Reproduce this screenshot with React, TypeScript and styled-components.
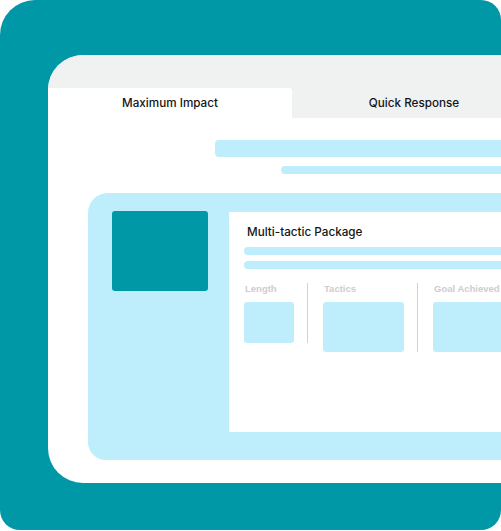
import styled, {createGlobalStyle} from "styled-components";

const GlobalStyle = createGlobalStyle`
    html, body {
        margin: 0;
        padding: 0;
        background: #ffffff;
    }
    * {
        box-sizing: border-box;
    }
`

const columns = [
    {label: "Length", width: 50, height: 41},
    {label: "Tactics", width: 81, height: 50},
    {label: "Goal Achieved", width: 120, height: 50},
]

export default function App() {
    return (
        <>
            <GlobalStyle/>
            <Card>
                <Window>
                    <TopStrip/>
                    <Tabs>
                        <Tab active>Maximum Impact</Tab>
                        <Tab>Quick Response</Tab>
                    </Tabs>
                    <Bar offset={167} height={17} top={22}/>
                    <Bar offset={233} height={8} top={9}/>
                    <Panel>
                        <Thumb/>
                        <Detail>
                            <Title>Multi-tactic Package</Title>
                            <Line/>
                            <Line/>
                            <Columns>
                                {columns.map((col, i) => (
                                    <Column key={col.label} last={i === columns.length - 1}>
                                        <Label>{col.label}</Label>
                                        <Box w={col.width} h={col.height}/>
                                    </Column>
                                ))}
                            </Columns>
                        </Detail>
                    </Panel>
                </Window>
            </Card>
        </>
    );
}

const Card = styled.div`
    width: 501px;
    height: 530px;
    background: #0097a7;
    border-radius: 35px 20px 20px 20px;
    padding: 55px 0 47px 48px;
    overflow: hidden;
    display: flex;
`

const Window = styled.div`
    width: 500px;
    flex-shrink: 0;
    height: 100%;
    background: #ffffff;
    border-radius: 35px 0 0 35px;
    overflow: hidden;
    display: flex;
    flex-direction: column;
    font-family: Inter, "Liberation Sans", sans-serif;
`

const TopStrip = styled.div`
    height: 33px;
    background: #f0f1f1;
    flex-shrink: 0;
`

const Tabs = styled.div`
    display: flex;
    height: 30px;
    flex-shrink: 0;
    background: #f0f1f1;
`

const Tab = styled.div<{ active?: boolean }>`
    width: 244px;
    flex-shrink: 0;
    display: flex;
    align-items: center;
    justify-content: center;
    font-size: 11.7px;
    font-weight: 500;
    color: #141414;
    background: ${p => p.active ? "#ffffff" : "#f0f1f1"};
    border-top-right-radius: ${p => p.active ? "3px" : "0"};
`

const Bar = styled.div<{ offset: number; height: number; top: number }>`
    margin: ${p => p.top}px 0 0 ${p => p.offset}px;
    height: ${p => p.height}px;
    background: #beeefc;
    border-radius: 4px 0 0 4px;
    flex-shrink: 0;
`

const Panel = styled.div`
    margin: 19px 0 0 40px;
    height: 267px;
    flex-shrink: 0;
    background: #beeefc;
    border-radius: 20px 0 0 18px;
    padding: 18px 0 28px 24px;
    display: flex;
    gap: 21px;
`

const Thumb = styled.div`
    width: 96px;
    height: 80px;
    flex-shrink: 0;
    background: #0097a7;
    border-radius: 3px;
`

const Detail = styled.div`
    flex: 1;
    margin-top: 1px;
    background: #ffffff;
    padding: 13px 0 0 15px;
    display: flex;
    flex-direction: column;
`

const Title = styled.div`
    font-size: 11.7px;
    line-height: 14px;
    font-weight: 500;
    color: #141414;
    margin-bottom: 8px;
    padding-left: 3px;
`

const Line = styled.div`
    height: 8px;
    background: #beeefc;
    border-radius: 4px 0 0 4px;
    margin-bottom: 6px;
`

const Columns = styled.div`
    display: flex;
    align-items: flex-start;
    margin-top: 8px;
`

const Column = styled.div<{ last?: boolean }>`
    display: flex;
    flex-direction: column;
    gap: 7px;
    padding-right: ${p => p.last ? "0" : "13px"};
    margin-right: ${p => p.last ? "0" : "15px"};
    border-right: ${p => p.last ? "none" : "1px solid #d2d2d2"};
    min-height: 56px;
`

const Label = styled.div`
    font-family: "Liberation Sans", Arial, sans-serif;
    font-size: 9.5px;
    line-height: 12px;
    font-weight: 700;
    color: #cdcdcd;
    padding-left: 1px;
    white-space: nowrap;
`

const Box = styled.div<{ w: number; h: number }>`
    width: ${p => p.w}px;
    height: ${p => p.h}px;
    background: #beeefc;
    border-radius: 3px;
`
